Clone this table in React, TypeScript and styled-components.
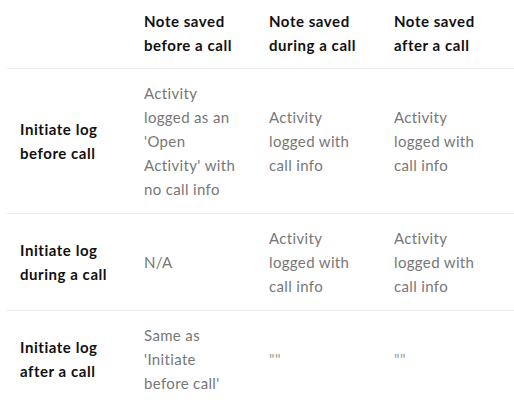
import React from "react";
import styled, { createGlobalStyle } from "styled-components";

const Global = createGlobalStyle`
  html, body { margin: 0; padding: 0; background: #fff; }
  body { font-family: "Lato", "Noto Sans", sans-serif; overflow: hidden; }
`;

const Wrap = styled.div`
  width: 514px;
  height: 406px;
  overflow: hidden;
  padding-left: 7px;
  box-sizing: border-box;
`;

const Table = styled.table`
  border-collapse: collapse;
  width: 507px;
  table-layout: fixed;
  font-size: 15px;
  line-height: 24px;
`;

const Col = styled.col<{ $w: number }>`
  width: ${(p) => p.$w}px;
`;

const HeadCell = styled.th<{ $last?: boolean }>`
  text-align: left;
  vertical-align: middle;
  font-weight: 700;
  letter-spacing: 0.55px;
  color: #111;
  padding: 9px ${(p) => (p.$last ? 26 : 18)}px 11px 13px;
  height: 48px;
`;

const Row = styled.tr`
  border-top: 1px solid #ebebeb;
`;

const LabelCell = styled.th`
  text-align: left;
  font-weight: 700;
  letter-spacing: 0.55px;
  color: #111;
  padding: 12px 13px;
  vertical-align: middle;
`;

const Cell = styled.td<{ $faint?: boolean; $last?: boolean }>`
  color: ${(p) => (p.$faint ? "#9a9a9a" : "#777")};
  letter-spacing: 0.35px;
  padding: 12px ${(p) => (p.$last ? 28 : 20)}px 12px 13px;
  vertical-align: middle;
  height: 72px;
`;

const rows: { label: string; cells: { text: string; faint?: boolean }[] }[] = [
  {
    label: "Initiate log before call",
    cells: [
      { text: "Activity logged as an 'Open Activity' with no call info" },
      { text: "Activity logged with call info" },
      { text: "Activity logged with call info" },
    ],
  },
  {
    label: "Initiate log during a call",
    cells: [
      { text: "N/A" },
      { text: "Activity logged with call info" },
      { text: "Activity logged with call info" },
    ],
  },
  {
    label: "Initiate log after a call",
    cells: [
      { text: "Same as 'Initiate before call'" },
      { text: '""', faint: true },
      { text: '""', faint: true },
    ],
  },
];

const headers = ["Note saved before a call", "Note saved during a call", "Note saved after a call"];
const colWidths = [124, 125, 125, 133];

export default function App() {
  return (
    <>
      <Global />
      <Wrap>
        <Table>
          <colgroup>
            {colWidths.map((w, i) => (
              <Col key={i} $w={w} />
            ))}
          </colgroup>
          <thead>
            <tr>
              <HeadCell />
              {headers.map((h, i) => (
                <HeadCell key={h} $last={i === headers.length - 1}>
                  {h}
                </HeadCell>
              ))}
            </tr>
          </thead>
          <tbody>
            {rows.map((r) => (
              <Row key={r.label}>
                <LabelCell>{r.label}</LabelCell>
                {r.cells.map((c, i) => (
                  <Cell key={i} $faint={c.faint} $last={i === r.cells.length - 1}>
                    {c.text}
                  </Cell>
                ))}
              </Row>
            ))}
          </tbody>
        </Table>
      </Wrap>
    </>
  );
}
